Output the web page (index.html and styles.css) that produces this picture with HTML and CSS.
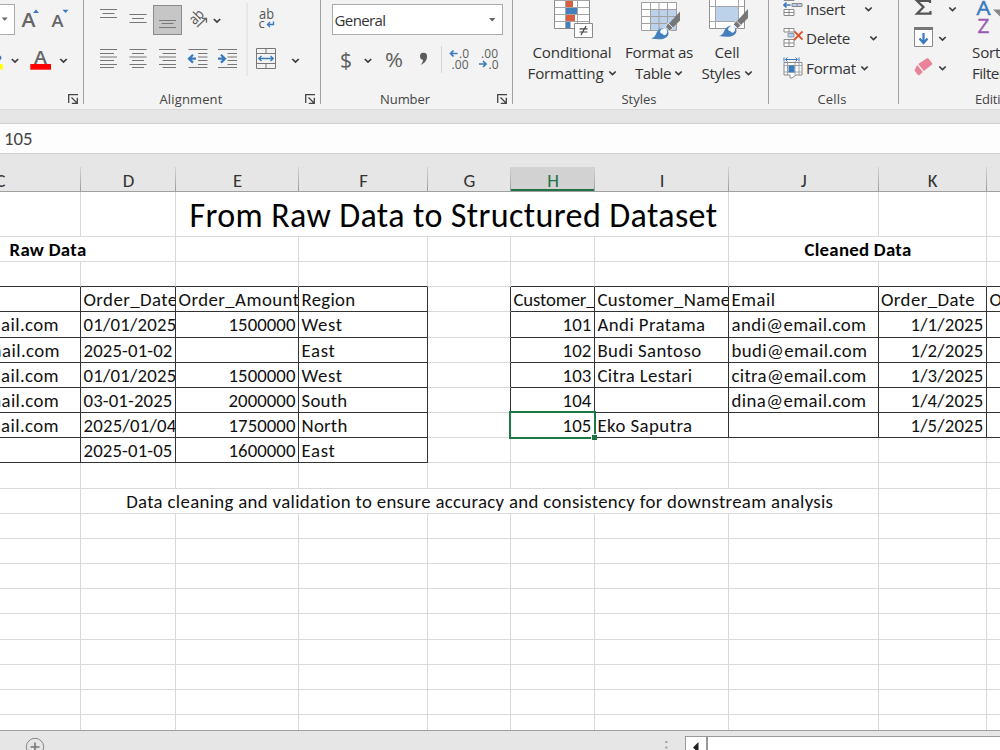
FILE: index.html
```
<!DOCTYPE html>
<html lang="en">
<head>
<meta charset="utf-8">
<title>Spreadsheet</title>
<link rel="stylesheet" href="styles.css">
</head>
<body>
<svg class="defs" width="0" height="0">
  <defs>
    <path id="chev" d="M-3.2-1.5L0 1.6 3.2-1.5" fill="none" stroke="#3b3b3b" stroke-width="1.7"/>
    <g id="launch" fill="none" stroke="#444" stroke-width="1.3"><path d="M.7 9V.7H10M3.5 3.5L9 9M9.3 3.8v5.5H3.8"/></g>
    <g id="brush">
      <path d="M28 0v9l-7 7-4-4z" fill="#777"/>
      <path d="M16 11.5l5 5-3.5 3-4-4z" fill="#777" stroke="#f3f3f3" stroke-width=".8"/>
      <path d="M-1 27C5 26 3 19 9 17c5-1 9 3 7 7-3 5-11 4-17 3z" fill="#4480bd"/>
      <path d="M8 20c2-4 6-4 7-1s-2 6-4 4c-1-2-2 0-3-3z" fill="#f6f9fc"/>
    </g>
  </defs>
</svg>
<div class="app">
  <header class="ribbon">
    <section class="group g-font">
      <svg class="tools" width="83" height="90" viewBox="0 0 83 90">
        <rect x="-5" y="4.5" width="19.5" height="30" fill="#fff" stroke="#ababab"/>
        <path d="M1.7 17.5h6l-3 3.3z" fill="#666"/>
        <g fill="#666" class="seg semi"><text x="21.5" y="27" font-size="19.5" textLength="14" lengthAdjust="spacingAndGlyphs">A</text><text x="51.5" y="27" font-size="17" textLength="12" lengthAdjust="spacingAndGlyphs">A</text><text x="34" y="64" font-size="18.5" textLength="13" lengthAdjust="spacingAndGlyphs">A</text></g>
        <path d="M33 13l3-3.5 3 3.5zM62.500 9.700h6l-3 3.300z" fill="#3a7abf"/>
        <path d="M0 55.500q3 2 0 5z" fill="#3a7abf"/>
        <path d="M0 64h2.800v5.500H0z" fill="#ff0"/>
        <path d="M30.300 64H51v5.700H30.300z" fill="#f00"/>
        <use href="#chev" x="15" y="60.500"/><use href="#chev" x="63.500" y="60.500"/>
      </svg>
      <div class="caption"><svg class="launcher" width="11" height="11"><use href="#launch"/></svg></div>
    </section>
    <section class="group g-align">
      <svg class="tools" width="236" height="90" viewBox="84 0 236 90">
        <rect x="153.500" y="5.500" width="28" height="29" fill="#c6c6c6" stroke="#8c8c8c"/>
        <g stroke="#777" fill="none" stroke-width="1">
          <path d="M100 9.500h17M102.500 13.500h12M100 17.500h17M129.500 14.500h17M132 18.500h12M129.500 22.500h17M159 20.500h17M161.500 23.500h12M159 27.500h17"/>
          <path d="M100 49.500h17M100 53.500h14M100 57h17M100 60.500h14M100 64.500h17M100 67.500h14"/>
          <path d="M129.500 49.500h17M132 53.500h12M129.500 57h17M132 60.500h12M129.500 64.500h17M132 67.500h12"/>
          <path d="M159 49.500h17M162.500 53.500H176M159 57h17M162.500 60.500H176M159 64.500h17M162.500 67.500H176"/>
          <path d="M188.500 49.500h19M198 53.500h9.500M198 57h9.500M198 60.500h9.500M198 64.500h9.500M188.500 67.500h19"/>
          <path d="M218 49.500h19M227.500 53.500h9.500M227.500 57h9.500M227.500 60.500h9.500M227.500 64.500h9.500M218 67.500h19"/>
          <path d="M197 27l9-8.500M202 18.300h4.500v4.500" stroke="#666" stroke-width="1.300"/>
          <path d="M256.500 48.500h19v20h-19zM256.500 53.500h19M256.500 63.500h19M266 48.500v5M266 63.500v5"/>
        </g>
        <path d="M247 3v73" stroke="#dcdcdc"/>
        <g fill="none" stroke="#3a7abf" stroke-width="2.200"><path d="M196 58.700h-6M193 54.800l-4 3.900 4 3.900M218 58.700h6M221 54.800l4 3.900-4 3.900"/></g>
        <path d="M259 58.500h14M261.500 56l-2.700 2.500 2.700 2.500M270.500 56l2.700 2.500-2.700 2.500M273.500 21.500v3h-6M270 22l-2.500 2.500 2.500 2.500" fill="none" stroke="#3a7abf" stroke-width="1.400"/>
        <g class="seg" fill="#555"><text font-size="14.500" transform="translate(194.500 25.500) rotate(-45)" textLength="15" lengthAdjust="spacingAndGlyphs">ab</text><text x="259" y="19" font-size="14" textLength="15" lengthAdjust="spacingAndGlyphs">ab</text><text x="258.500" y="27.500" font-size="13">c</text></g>
        <use href="#chev" x="217" y="20.500"/><use href="#chev" x="295.500" y="60.500"/>
      </svg>
      <div class="caption"><span class="name" data-w="63">Alignment</span><svg class="launcher" width="11" height="11"><use href="#launch"/></svg></div>
    </section>
    <section class="group g-number">
      <div class="tools">
        <div class="select"><span data-w="51">General</span><svg width="7" height="4"><path d="M0 0h6.500L3.200 3.500z" fill="#666"/></svg></div>
        <svg width="191" height="54" viewBox="321 36 191 54">
          <g class="seg" fill="#5c5c5c"><text x="340" y="67.500" font-size="21" textLength="12" lengthAdjust="spacingAndGlyphs">$</text><text x="385" y="66.500" font-size="19.500" textLength="18" lengthAdjust="spacingAndGlyphs">%</text>
          <g font-size="12"><text x="459" y="57.500" textLength="10">.0</text><text x="451.500" y="68.500" textLength="17">.00</text><text x="481" y="57.500" textLength="17">.00</text><text x="488.500" y="68.500" textLength="10">.0</text></g></g>
          <path d="M420 56a3.400 3.400 0 1 1 7 .500c0 4-2.500 7-6.500 8.500 1.500-1.700 2.500-3 2.600-5.200-1.800.3-3.100-1.600-3.100-3.800z" fill="#5c5c5c"/>
          <path d="M441.500 46v27" stroke="#d5d5d5"/>
          <path d="M457.500 53.500H451M453.500 50.500l-3 3 3 3M479 64h6.500M483 61l3 3-3 3" fill="none" stroke="#3a7abf" stroke-width="1.700"/>
          <use href="#chev" x="368" y="60.500"/>
        </svg>
      </div>
      <div class="caption"><span class="name" data-w="50">Number</span><svg class="launcher" width="11" height="11"><use href="#launch"/></svg></div>
    </section>
    <section class="group g-styles">
      <div class="tools">
        <div class="big b1">
          <svg width="40" height="41" viewBox="554 0 40 41">
            <path d="M554.500-5h35v33.500h-35z" fill="#fff" stroke="#8a8a8a"/>
            <path d="M565.500 0v28M577.500 0v28M554.500.500h35M554.500 7.500h35M554.500 14.500h35M554.500 21.500h35" stroke="#a5a5a5" fill="none"/>
            <path d="M566 1h7v6h-7zM566 15h9v6h-9z" fill="#d8603f"/><path d="M566 8h11v6h-11zM566 22h4.500v6H566z" fill="#4480bd"/>
            <path d="M574.500 23.500h18v14h-18z" fill="#fff" stroke="#8a8a8a"/>
            <path d="M579.500 28.800h8M579.500 32h8M586 26l-5 9" stroke="#444" stroke-width="1.200"/>
          </svg>
          <span data-w="79">Conditional</span>
          <div class="line"><span data-w="76">Formatting</span><svg width="9" height="8"><use href="#chev" x="4.500" y="4"/></svg></div>
        </div>
        <div class="big b2">
          <svg width="40" height="41" viewBox="641 0 40 41">
            <path d="M641.500 2.500h35v28h-35z" fill="#fff"/><path d="M650.500 10h26v20.500h-26z" fill="#bcd1ea"/>
            <path d="M641.500 2.500h35v28h-35zM650.500 2.500v28M659 2.500v28M667.500 2.500v28M641.500 9.500h35M641.500 16.500h35M641.500 23.500h35" fill="none" stroke="#a0a0a0"/>
            <use href="#brush" x="652" y="11.500"/>
          </svg>
          <span data-w="68">Format as</span>
          <div class="line"><span data-w="36">Table</span><svg width="9" height="8"><use href="#chev" x="4.500" y="4"/></svg></div>
        </div>
        <div class="big b3">
          <svg width="40" height="41" viewBox="709 0 40 41">
            <path d="M709.500-3h35v31.500h-35z" fill="#fff" stroke="#909090"/>
            <path d="M716 7h22v15h-22z" fill="#bcd1ea"/>
            <path d="M715.500 0v28M738.500 0v28M709.500 6.500h35M709.500 21.500h35" fill="none" stroke="#a5a5a5"/>
            <use href="#brush" x="720" y="9"/>
          </svg>
          <span data-w="25">Cell</span>
          <div class="line"><span data-w="39">Styles</span><svg width="9" height="8"><use href="#chev" x="4.500" y="4"/></svg></div>
        </div>
      </div>
      <div class="caption"><span class="name" data-w="35">Styles</span></div>
    </section>
    <section class="group g-cells">
      <div class="tools">
        <div class="cmd">
          <svg width="20" height="20" viewBox="782.500 0 20 20"><path d="M783.500-3h10v4.500h-10zM788.500-3v4.500M783.500 10.500h10v6h-10zM788.500 10.500v6M783.500 13.500h10" fill="#fff" stroke="#8a8a8a"/><path d="M791.500 4.500h10v3h-10zM796.500 4.500v3" fill="#bcd1ea" stroke="#8a8a8a"/><path d="M790 6h-6M786 3.500L783.500 6l2.500 2.500" fill="none" stroke="#3a7abf" stroke-width="1.600"/></svg>
          <span data-w="39">Insert</span><svg class="c1" width="9" height="8"><use href="#chev" x="4.500" y="4"/></svg>
        </div>
        <div class="cmd">
          <svg width="20" height="20" viewBox="782.500 28 20 20"><path d="M783.500 28.500h10V32h-10zM788.500 28.500V32M783.500 39.500h10v7h-10zM788.500 39.500v7M783.500 43h10" fill="#fff" stroke="#8a8a8a"/><path d="M787.500 33.500h6v3.500h-6z" fill="#bcd1ea" stroke="#8a9db3"/><path d="M794 31.500l8 8M802 31.500l-8.500 8.500" stroke="#e0522c" stroke-width="1.800"/></svg>
          <span data-w="44">Delete</span><svg class="c2" width="9" height="8"><use href="#chev" x="4.500" y="4"/></svg>
        </div>
        <div class="cmd">
          <svg width="20" height="22" viewBox="782.500 56 20 22"><path d="M783.500 61.500h18v12.500h-6l-4 3h-2v-3h-6z" fill="#fff" stroke="#8a8a8a"/><path d="M787 61.500V74M794.500 61.500V74M798.500 61.500V74M783.500 64.500h18M783.500 71h18" stroke="#a0a0a0"/><path d="M788 64.500h6v7h-6z" fill="#3a7abf"/><path d="M783.500 56.500v4M798.500 56.500v4M785 58.500h12M787 56.500l-2 2 2 2M795 56.500l2 2-2 2" fill="none" stroke="#3a7abf"/></svg>
          <span data-w="50">Format</span><svg class="c3" width="9" height="8"><use href="#chev" x="4.500" y="4"/></svg>
        </div>
      </div>
      <div class="caption"><span class="name" data-w="29">Cells</span></div>
    </section>
    <section class="group g-edit">
      <div class="tools">
        <svg width="66" height="90" viewBox="899 0 66 90">
          <path d="M930 3V.8h-13l6.500 6.300-6.500 6.500h13.500V11" fill="none" stroke="#555" stroke-width="2.200"/>
          <path d="M914.500 27.500h18v19h-18z" fill="#fff" stroke="#8a8a8a"/><path d="M914 27h19v3h-19z" fill="#777"/>
          <path d="M923.500 33v9M919.500 38.500l4 4.500 4-4.500" fill="none" stroke="#3a7abf" stroke-width="2.200"/>
          <path d="M926.500 58.500q1-.8 2 0l3.500 4.500q.8 1-.2 1.800l-8 6.200-5.500-7z" fill="#e8839a"/><path d="M917.300 65l5.500 7-3.300 3q-1 .6-1.800-.3l-2.900-4q-.6-1 .2-1.800z" fill="#e8839a"/>
          <use href="#chev" x="952.500" y="9"/><use href="#chev" x="942.500" y="38.500"/><use href="#chev" x="942.500" y="68"/>
        </svg>
        <div class="sort">
          <svg width="40" height="41" viewBox="970 0 40 41"><g class="seg"><text x="976.500" y="14.500" font-size="20" fill="#3a7abf" stroke="#3a7abf" stroke-width=".5" textLength="14" lengthAdjust="spacingAndGlyphs">A</text><text x="977.500" y="33" font-size="19.500" fill="#9b59b6" stroke="#9b59b6" stroke-width=".4" textLength="12" lengthAdjust="spacingAndGlyphs">Z</text></g><path d="M993 9.500h20l-10 10z" fill="#888"/></svg>
          <span data-w="43">Sort &amp;</span><span data-w="32.5">Filter</span>
        </div>
      </div>
      <div class="caption"><span class="name" data-w="40">Editing</span></div>
    </section>
  </header>
  <div class="formula"><span data-w="28.500">105</span></div>
  <div class="sheet" id="sheet"></div>
  <footer class="status">
    <svg class="add" width="20" height="20" viewBox="0 0 20 20"><circle cx="10" cy="10" r="8.700" fill="none" stroke="#888"/><path d="M10 5.500v9M5.500 10h9" stroke="#777" stroke-width="1.600"/></svg>
    <svg class="grip" width="3" height="12"><path d="M0 3h2.500v2H0zM0 8.500h2.500v2H0z" fill="#aaa"/></svg>
    <div class="scroll"><div class="arrow"><svg width="6" height="11"><path d="M5.500 0v11L0 5.500z" fill="#222"/></svg></div></div>
  </footer>
</div>
<script src="app.js"></script>
</body>
</html>
```
FILE: styles.css
```
body { margin: 0; background: #fff; }
.defs { position: absolute; }
.app { width: 1000px; height: 750px; overflow: hidden; display: flex; flex-direction: column; background: #e6e6e6; font-family: "Open Sans", "Noto Sans", sans-serif; color: #333; }
.app svg { display: block; flex: none; }
.seg { font-family: "Open Sans", "Noto Sans", sans-serif; }
.semi { font-weight: 600; }
[data-w] { white-space: pre; display: inline-block; }

.ribbon { display: flex; flex: none; height: 109px; background: #f3f3f3; border-bottom: 1px solid #dadada; overflow: hidden; }
.group { flex: none; height: 104px; box-sizing: border-box; border-right: 1px solid #a0a0a0; display: flex; flex-direction: column; }
.tools { height: 90px; flex: none; }
.caption { display: flex; height: 14px; font-size: 13px; line-height: 18px; color: #444; }
.caption .name { margin: 0 auto; }
.launcher { margin: 4px 4px 0 auto; }
.g-font { width: 84px; }
.g-align { width: 237px; }
.g-number { width: 192px; }
.g-styles { width: 256px; }
.g-cells { width: 130px; }
.g-edit { width: 140px; border-right: 0; }
.g-align .name { margin: 0 auto 0 75.5px; }
.g-number .name { margin: 0 auto 0 59px; }
.g-styles .caption, .g-cells .caption { padding-right: 3px; }
.g-edit .name { margin: 0 0 0 76px; }

.select { width: 171px; height: 31px; margin: 4px 0 1px 10.5px; box-sizing: border-box; border: 1px solid #ababab; background: #fff; display: flex; align-items: center; justify-content: space-between; padding: 0 6px 0 2px; font-size: 15px; }

.g-styles .tools { display: flex; }
.big { display: flex; flex-direction: column; align-items: center; font-size: 15.2px; line-height: 21px; }
.big > svg { margin: 0 0 1px 4px; }
.line { display: flex; align-items: center; gap: 4px; }
.b1 { width: 92px; margin-left: 13px; }
.b2 { width: 72px; margin-left: 5px; }
.b3 { width: 56px; margin-left: 4px; }
.b2 .line, .b3 .line { gap: 3px; }
.line > svg { margin-top: -1px; }

.g-cells .tools { padding: 0 0 0 13.5px; box-sizing: border-box; }
.cmd { display: flex; align-items: center; height: 29.5px; gap: 3.5px; font-size: 15.2px; line-height: 20px; }
.cmd:first-child { height: 24px; margin-top: -3px; margin-bottom: 2.500px; }
.c1 { margin-left: 15px; }
.c2 { margin-left: 15px; }

.g-edit .tools { display: flex; }
.sort { display: flex; flex-direction: column; align-items: flex-start; margin-left: 5px; font-size: 15.2px; line-height: 21px; }
.sort svg { margin-bottom: 1px; }
.sort span { margin-left: 2px; }

.formula { flex: none; height: 29px; margin-top: 13px; background: #fdfdfd; border-top: 1px solid #cfcfcf; border-bottom: 1px solid #cfcfcf; padding-left: 4px; font: 18.8px/30px Carlito, Lato, sans-serif; color: #444; }

.sheet { flex: none; width: 1093px; height: 576px; margin-left: -80px; overflow: hidden; background: #fff; font-family: Carlito, Lato, "Open Sans", sans-serif; font-size: 18.8px; color: #111; }
.row { display: grid; grid-template-columns: 161px 95px 123px 129px 83px 84px 134px 149.5px 108.5px 26px; grid-template-rows: 100%; height: 25.17px; }
.row.head { height: 38px; background: #e6e6e6; color: #333; align-items: end; border-bottom: 1px solid #9f9f9f; box-sizing: border-box; }
.head .col { height: 24px; line-height: 27px; text-align: center; border-right: 1px solid; border-image: linear-gradient(#d6d6d6, #999) 1; padding-left: 1px; }
.head .col.on { background: #d2d2d2; color: #217346; box-shadow: inset 0 -2px #217346; }
.row.title { height: 45px; }
.cell { min-width: 0; overflow: hidden; white-space: pre; box-sizing: border-box; border-right: 1px solid #d9d9d9; border-bottom: 1px solid #d9d9d9; line-height: 25.6px; padding-left: 2.5px; }
.cell:first-child { padding-left: 4px; }
.cell.bb { border-bottom-color: #333; }
.cell.br { border-right-color: #333; }
.cell.num { text-align: right; padding: 0 2.5px 0 0; }
.cell.mid { text-align: center; padding: 0 0 0 1px; }
.cell.bold { font-weight: 700; color: #000; }
.title .cell { font-size: 34px; line-height: 47px; color: #000; }
.title .cell.mid { padding-left: 3px; }
.cell.sel { overflow: visible; position: relative; }
.cell.sel::before { content: ""; position: absolute; inset: -2px -2px -2px -2px; border: 2px solid #1e7a45; }
.cell.sel::after { content: ""; position: absolute; right: -3px; bottom: -3px; width: 5px; height: 5px; background: #217346; border: 1px solid #fff; border-right: 0; border-bottom: 0; }

.status { height: 20px; flex: none; border-top: 1px solid #9f9f9f; display: flex; align-items: flex-start; background: #e6e6e6; }
.add { margin: 6px 0 0 24.5px; }
.grip { margin: 7px 0 0 620.500px; }
.scroll { margin: 5px 0 0 17px; width: 330px; flex: none; height: 20px; border: 1px solid #999; background: #fff; display: flex; }
.arrow { width: 20px; border-right: 2px solid #999; }
.arrow svg { margin: 5px 0 0 7px; }
```
FILE: app.js
```
const sheet = document.getElementById('sheet');

function add(parent, cls, text, width) {
  const el = document.createElement('div');
  el.className = cls;
  if (text) {
    const s = document.createElement('span');
    s.textContent = text;
    if (width) s.dataset.w = width;
    el.append(s);
  }
  parent.append(el);
  return el;
}

const head = add(sheet, 'row head');
['C', 'D', 'E', 'F', 'G', 'H', 'I', 'J', 'K', ''].forEach(c => add(head, 'col' + (c === 'H' ? ' on' : ''), c));

// Merged rows: [text, column span, class, text width]
function merged(cls, parts) {
  const row = add(sheet, 'row ' + cls);
  parts.forEach(([text, span, extra, w]) => {
    for (let i = 0; i < (text ? 1 : span); i++) {
      const cell = add(row, 'cell ' + (extra || ''), text, w);
      if (text) cell.style.gridColumn = 'span ' + span;
    }
  });
}

merged('title', [['', 2], ['From Raw Data to Structured Dataset', 5, 'mid', 528], ['', 3]]);
merged('', [['Raw Data', 2, 'mid bold', 77], ['', 5], ['Cleaned Data', 2, 'mid bold', 107], ['', 1]]);
merged('', [['', 4, 'bb'], ['', 1], ['', 5, 'bb']]);

// Each entry is [text, width]; a null entry is an empty cell.
const andi = ['andi@email.com', 135], budi = ['budi@email.com', 136];
const citra = ['citra@email.com', 135], dina = ['dina@email.com', 135];
const data = [
  [null, ['Order_Date', 94], ['Order_Amount', 121], ['Region', 54], null, ['Customer_ID', 98], ['Customer_Name', 133], ['Email', 44], ['Order_Date', 94], ['Order_Amount', 121]],
  [andi, ['01/01/2025', 93], ['1500000', 67], ['West', 41], null, ['101', 29], ['Andi Pratama', 108], andi, ['1/1/2025', 73], null],
  [budi, ['2025-01-02', 89], null, ['East', 34], null, ['102', 29], ['Budi Santoso', 104], budi, ['1/2/2025', 73], null],
  [andi, ['01/01/2025', 93], ['1500000', 67], ['West', 41], null, ['103', 29], ['Citra Lestari', 95], citra, ['1/3/2025', 73], null],
  [citra, ['03-01-2025', 89], ['2000000', 67], ['South', 46], null, ['104', 29], null, dina, ['1/4/2025', 73], null],
  [dina, ['2025/01/04', 93], ['1750000', 67], ['North', 46], null, ['105', 29], ['Eko Saputra', 95], null, ['1/5/2025', 73], null],
  [null, ['2025-01-05', 89], ['1600000', 67], ['East', 34], null, null, null, null, null, null]
];
data.forEach((cells, r) => {
  const row = add(sheet, 'row');
  cells.forEach((d, c) => {
    let cls = 'cell';
    const left = c < 4, right = c > 4 && r < 6;
    if (left || right) cls += ' bb br';
    if (c === 4 && r < 6) cls += ' br';
    if (r > 0 && (c === 2 || c === 5 || c === 8)) cls += ' num';
    if (r === 5 && c === 5) cls += ' sel';
    add(row, cls, d && d[0], d && d[1]);
  });
});

merged('', [['', 10]]);
merged('', [['', 1], ['Data cleaning and validation to ensure accuracy and consistency for downstream analysis', 7, 'mid', 707], ['', 2]]);
for (let i = 0; i < 10; i++) merged('', [['', 10]]);

// Track every label out to its nominal width.
document.querySelectorAll('[data-w]').forEach(el => {
  const natural = el.getBoundingClientRect().width;
  el.style.letterSpacing = (el.dataset.w - natural) / el.textContent.length + 'px';
});
```
